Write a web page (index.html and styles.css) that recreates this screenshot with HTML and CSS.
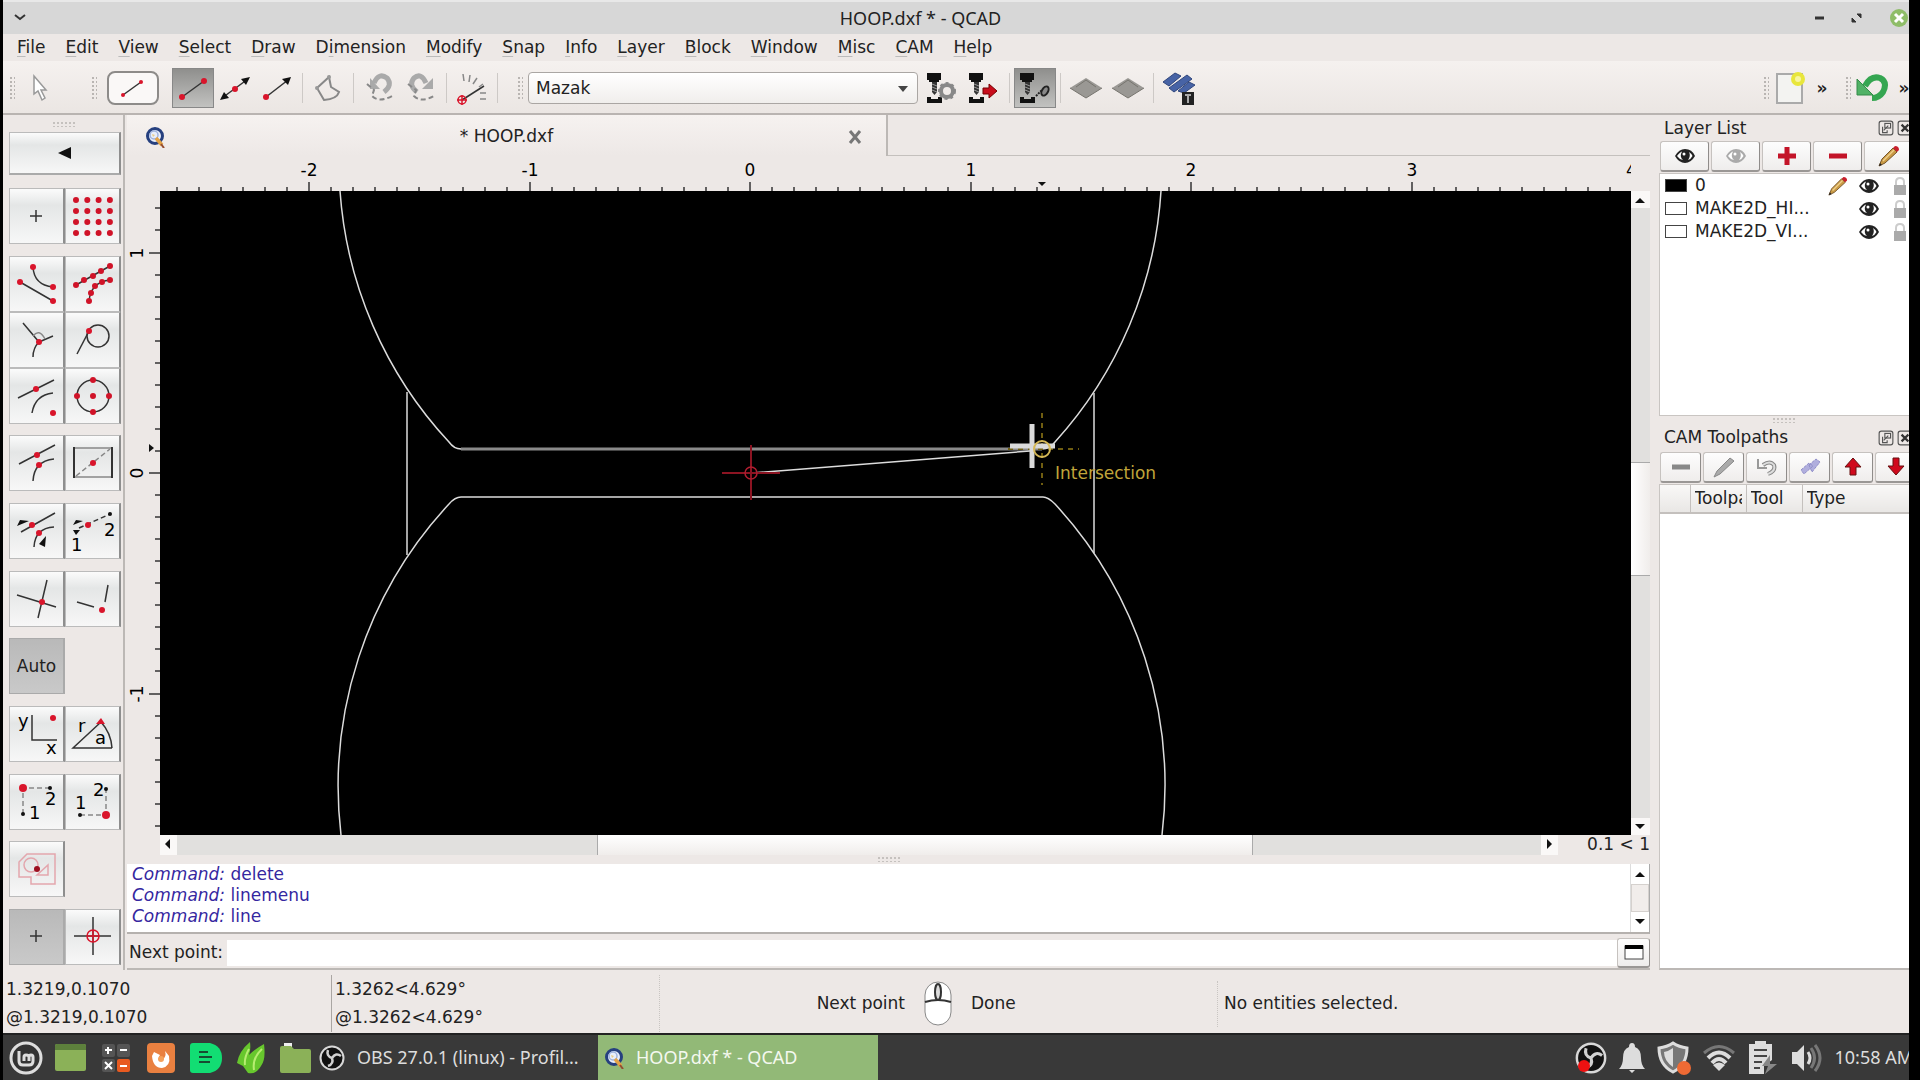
FILE: index.html
```html
<!DOCTYPE html>
<html lang="en">

<head>
    <meta charset="UTF-8">
    <meta name="viewport" content="width=device-width, initial-scale=1.0">
    <title>HOOP.dxf * - QCAD</title>
    <link rel="stylesheet" href="styles.css">
</head>

<body>
    <!-- Shared icons -->
    <svg class="defs" width="0" height="0">
        <symbol id="eye" viewBox="0 0 22 18">
            <path d="M1 9Q5 2 11 2Q18 2 21 9Q17 16 11 16Q5 16 1 9Z" fill="currentColor" />
            <path d="M3 9Q6 5 8 4.500Q5 10 9 13Q5 12 3 9ZM15 5Q18 7 18.500 9Q17 12 14 13Q17 9 15 5Z" fill="#fff" />
            <circle cx="10" cy="7" r="1.500" fill="#fff" />
        </symbol>
        <symbol id="pencil" viewBox="0 0 22 22">
            <path d="M1 21L4 14L15 3L19 7L7 18Z" fill="#c99a45" stroke="#75552a" />
            <path d="M5 16L16 5" stroke="#efd08b" stroke-width="1.500" />
            <path d="M15 3L17 1Q21 1 21 5L19 7Z" fill="#c8202c" />
            <path d="M1 21L2 18L4 20Z" fill="#222" />
        </symbol>
        <symbol id="lock" viewBox="0 0 14 20">
            <path d="M3 10V6Q3 2 7 2Q11 2 11 6V10" fill="none" stroke="#ccc" stroke-width="2" />
            <rect x="1" y="9" width="12" height="10" fill="#aaa" />
        </symbol>
        <symbol id="qcad" viewBox="0 0 20 22">
            <circle cx="10" cy="10" r="7.500" fill="#e8eefb" stroke="#26407f" stroke-width="3" />
            <circle cx="9" cy="9" r="4" fill="none" stroke="#9fb2dd" stroke-width="1.500" />
            <path d="M11 12L17 19" stroke="#e3a347" stroke-width="3.500" />
            <path d="M7 8L10 9L8 11Z" fill="#e9cc86" />
            <path d="M16 18L19 22" stroke="#944d30" stroke-width="2" />
        </symbol>
        <symbol id="mill" viewBox="0 0 28 32">
            <path d="M1 1H15V8H13V10H3V8H1Z" fill="#111" />
            <path d="M6 10H11V20L8.500 23L6 20Z" fill="#333" />
            <path d="M6 12L11 14M6 15L11 17M6 18L11 20" stroke="#999" />
            <path d="M1 25H5V27H12V25H16V31H1Z" fill="#111" />
        </symbol>
        <symbol id="float" viewBox="0 0 14 14">
            <rect x="1" y="1" width="12" height="12" rx="2" fill="none" stroke="#555" />
            <rect x="6" y="3" width="5" height="4" fill="none" stroke="#555" />
            <path d="M4 6V11H8V9M5 9L9 5" fill="none" stroke="#555" />
        </symbol>
        <symbol id="shut" viewBox="0 0 14 14">
            <rect x="1" y="1" width="12" height="12" rx="2" fill="none" stroke="#555" />
            <path d="M4 4L10 10M10 4L4 10" stroke="#333" stroke-width="2" />
        </symbol>
        <symbol id="obs" viewBox="0 0 26 26">
            <circle cx="13" cy="13" r="11.500" fill="#111" stroke="#d8d8d8" stroke-width="2" />
            <path d="M13 13Q7 11 9 5M13 13Q17 7 22 11M13 13Q15 19 9 21" fill="none" stroke="#d0d0d0" stroke-width="2.500" />
        </symbol>
    </svg>

    <div class="window">
        <header class="titlebar">
            <button class="plain" aria-label="Window menu"><svg width="12" height="8"><path d="M1 1L6 5L11 1" class="k2" /></svg></button>
            <h1>HOOP.dxf * - QCAD</h1>
            <div class="window-buttons">
                <button class="plain" aria-label="Minimize"><svg width="10" height="10"><path d="M0 5H9" class="k3" /></svg></button>
                <button class="plain" aria-label="Maximize"><svg width="12" height="12"><path d="M6 2H10V6ZM1 6V10H5Z" fill="#333" stroke="#333" /></svg></button>
                <button class="plain" aria-label="Close"><svg width="20" height="20"><circle cx="10" cy="10" r="9" fill="#8fbd68" /><path d="M6 6L14 14M14 6L6 14" stroke="#fff" stroke-width="3" /></svg></button>
            </div>
        </header>

        <nav class="menubar">
            <a href="#"><u>F</u>ile</a>
            <a href="#"><u>E</u>dit</a>
            <a href="#"><u>V</u>iew</a>
            <a href="#"><u>S</u>elect</a>
            <a href="#"><u>D</u>raw</a>
            <a href="#">D<u>i</u>mension</a>
            <a href="#"><u>M</u>odify</a>
            <a href="#"><u>S</u>nap</a>
            <a href="#"><u>I</u>nfo</a>
            <a href="#"><u>L</u>ayer</a>
            <a href="#"><u>B</u>lock</a>
            <a href="#"><u>W</u>indow</a>
            <a href="#"><u>M</u>isc</a>
            <a href="#"><u>C</u>AM</a>
            <a href="#"><u>H</u>elp</a>
        </nav>

        <div class="toolbar">
            <span class="grip"></span>
            <button class="tool wide" aria-label="Reset"><svg width="22" height="30"><path d="M5 3L17 17L12 17L16 25L13 27L9 18L5 21Z" fill="#fff" stroke="#999" stroke-width="1.500" /></svg></button>
            <span class="grip grip-far"></span>
            <button class="tool framed" aria-label="Line tools"><svg width="32" height="24"><path d="M6 19L24 6" class="k1" /><circle cx="6" cy="19" r="2" class="r" /><circle cx="24" cy="6" r="2" class="r" /></svg></button>
            <button class="tool pressed" aria-label="Line from two points"><svg width="34" height="34"><path d="M6 26L28 10" class="k1" /><circle cx="6" cy="26" r="3" class="r" /><circle cx="28" cy="10" r="3" class="r" /></svg></button>
            <button class="tool" aria-label="Infinite line"><svg width="34" height="34"><path d="M4 27L30 8" class="k1" /><path d="M2 29L6 21L11 27ZM32 6L28 14L23 8Z" class="k" /><circle cx="17" cy="18" r="3" class="r" /></svg></button>
            <button class="tool" aria-label="Ray"><svg width="34" height="34"><path d="M6 26L28 9" class="k1" /><path d="M31 6L28 14L22 8Z" class="k" /><circle cx="6" cy="26" r="3" class="r" /></svg></button>
            <span class="sep"></span>
            <button class="tool" aria-label="Polyline"><svg width="34" height="34"><path d="M6 17L18 6L20 16L28 21Q26 28 13 29Z" class="g2" /><circle cx="6" cy="17" r="2" fill="#999" /><circle cx="18" cy="6" r="2" fill="#999" /></svg></button>
            <span class="sep"></span>
            <button class="tool" aria-label="Undo segment"><svg width="34" height="34"><path d="M12 12Q17 1 25 7Q31 14 22 21" fill="none" stroke="#aaa" stroke-width="5" /><path d="M8 7V18H18Z" fill="#aaa" /><path d="M5 13L12 19L10 25Q17 32 30 25" class="g2 dash" /></svg></button>
            <button class="tool" aria-label="Redo segment"><svg width="34" height="34"><path d="M22 12Q17 1 10 7Q4 14 13 21" fill="none" stroke="#aaa" stroke-width="5" /><path d="M29 7V18H18Z" fill="#aaa" /><path d="M4 13L12 19L10 25Q17 32 30 25" class="g2 dash" /></svg></button>
            <span class="sep"></span>
            <button class="tool" aria-label="Angle"><svg width="34" height="34"><path d="M7 29L29 15" class="k1" /><path d="M8 3L9 10M15 4L14 11M22 7L18 13M28 13L24 16M31 22H25M31 28H25" class="g1" /><circle cx="7" cy="29" r="4" class="ro" /><path d="M2 29H12M7 24V34" class="rl" /></svg></button>
            <span class="sep"></span>
            <span class="grip"></span>
            <div class="combo">
                <select aria-label="CAM configuration">
                    <option>Mazak</option>
                </select>
                <svg width="10" height="6"><path d="M0 0H10L5 6Z" fill="#444" /></svg>
            </div>
            <button class="tool" aria-label="CAM setup"><svg width="32" height="32"><use href="#mill" width="28" height="32" /><circle cx="21" cy="19" r="6" fill="none" stroke="#888" stroke-width="4" /><circle cx="21" cy="19" r="8" fill="none" stroke="#888" stroke-width="2" stroke-dasharray="3 3" /></svg></button>
            <button class="tool" aria-label="CAM export"><svg width="32" height="32"><use href="#mill" width="28" height="32" /><path d="M15 16H21V12L29 19L21 26V22H15Z" fill="#c80d1c" stroke="#700" /></svg></button>
            <span class="sep"></span>
            <button class="tool pressed" aria-label="CAM toolpaths"><svg width="32" height="32"><use href="#mill" width="28" height="32" /><path d="M17 24L23 18" stroke="#222" stroke-width="2" stroke-dasharray="2 1" /><ellipse cx="26" cy="19" rx="3" ry="5" transform="rotate(30 26 19)" fill="#888" stroke="#222" stroke-width="2" /></svg></button>
            <span class="sep"></span>
            <button class="tool" aria-label="Simulate"><svg width="34" height="26"><path d="M1 13L17 3L33 13L17 23Z" fill="#9a9894" /><path d="M7 12L17 5L27 12M1 13L17 23L33 13" fill="none" stroke="#77756f" /></svg></button>
            <button class="tool" aria-label="Simulate all"><svg width="34" height="26"><path d="M1 13L17 3L33 13L17 23Z" fill="#9a9894" /><path d="M7 12L17 5L27 12M1 13L17 23L33 13" fill="none" stroke="#77756f" /></svg></button>
            <span class="sep"></span>
            <button class="tool" aria-label="Tool database"><svg width="36" height="36"><path d="M2 12L14 3L20 6L8 16ZM8 18L26 5L31 9L13 22ZM17 21L28 12L34 15L23 23Z" fill="#4763a5" stroke="#30467c" /><rect x="21" y="22" width="12" height="13" fill="#222" /><path d="M24 25H30M27 25V33" stroke="#aaa" stroke-width="2" /></svg></button>
            <span class="spring"></span>
            <span class="grip"></span>
            <button class="tool" aria-label="New"><svg width="32" height="34"><rect x="3" y="3" width="25" height="29" fill="#f3f3f1" stroke="#aaa" stroke-width="2" /><circle cx="24" cy="8" r="7" fill="#e8e63c" /><circle cx="24" cy="8" r="3" fill="#f8f6a0" /></svg></button>
            <button class="plain more" aria-label="More file tools">»</button>
            <span class="grip"></span>
            <button class="tool" aria-label="Undo"><svg width="34" height="30"><path d="M10 13Q16 2 25 5Q33 9 28 19Q24 25 17 25" fill="none" stroke="#35a651" stroke-width="6" /><path d="M2 6V22H18Z" fill="#51b266" stroke="#358b48" /></svg></button>
            <button class="plain more" aria-label="More edit tools">»</button>
        </div>

        <main class="workspace">
            <aside class="tools">
                <span class="grip-h"></span>
                <button class="cell back" aria-label="Back"><svg width="14" height="14"><path d="M13 1V13L0 7Z" class="k" /></svg></button>
                <div class="tool-groups">
                    <div class="group">
                        <button class="cell" aria-label="Free"><svg class="ic"><path d="M21 28H33M27 22V34" class="k1" /></svg></button>
                        <button class="cell" aria-label="Grid"><svg class="ic"><path d="M11 12H46M11 23H46M11 34H46M11 45H46" class="dots" /></svg></button>
                    </div>
                    <div class="group">
                        <button class="cell" aria-label="End points"><svg class="ic"><path d="M24 11Q25 29 44 31M11 26L44 45" class="k1" /><circle cx="24" cy="11" r="3" class="r" /><circle cx="44" cy="31" r="3" class="r" /><circle cx="11" cy="26" r="3" class="r" /><circle cx="44" cy="45" r="3" class="r" /></svg></button>
                        <button class="cell" aria-label="On entity"><svg class="ic"><path d="M11 29L45 10M24 45Q26 26 45 24" class="k1" /><path d="M11 29h0M19 24h0M28 20h0M36 15h0M45 10h0M24 45h0M26 37h0M30 30h0M37 26h0M45 24h0" class="spots" /></svg></button>
                        <button class="cell" aria-label="Perpendicular"><svg class="ic"><path d="M14 11L30 30L44 24M30 30Q24 36 24 45" class="k1" /><path d="M24 24Q30 16 36 27" class="g1" /><circle cx="30" cy="30" r="3" class="r" /></svg></button>
                        <button class="cell" aria-label="Tangential"><svg class="ic"><path d="M12 42L24 19" class="k1" /><circle cx="33" cy="24" r="11" class="k1" /><circle cx="24" cy="19" r="3" class="r" /></svg></button>
                        <button class="cell" aria-label="Reference"><svg class="ic"><path d="M9 30L45 12M23 45Q26 27 44 25" class="k1" /><circle cx="27" cy="21" r="3" class="r" /><circle cx="44" cy="45" r="3" class="r" /></svg></button>
                        <button class="cell" aria-label="Center"><svg class="ic"><circle cx="28" cy="28" r="16" class="k1" /><path d="M28 12h0M44 28h0M28 44h0M12 28h0M28 28h0" class="spots" /></svg></button>
                    </div>
                    <div class="group">
                        <button class="cell" aria-label="Middle"><svg class="ic"><path d="M10 29L46 10M24 46Q25 26 45 24" class="k1" /><circle cx="28" cy="20" r="3" class="r" /><circle cx="30" cy="30" r="3" class="r" /></svg></button>
                        <button class="cell" aria-label="Middle of rectangle"><svg class="ic"><path d="M9 13H47M9 42H47" class="g1" /><path d="M9 12V43M47 12V43" class="k2" /><path d="M11 41L45 14" class="g1 dash" /><circle cx="28" cy="28" r="3" class="r" /></svg></button>
                    </div>
                    <div class="group">
                        <button class="cell" aria-label="Distance"><svg class="ic"><path d="M12 29L46 10M25 44Q26 25 45 24" class="k1" /><path d="M8 23L11 17L20 18ZM30 41L37 33L36 44Z" class="k" /><circle cx="23" cy="22" r="3" class="r" /><circle cx="30" cy="30" r="3" class="r" /></svg></button>
                        <button class="cell" aria-label="Distance between points"><svg class="ic"><path d="M14 25L45 11" class="k1 dash" /><path d="M8 22L11 17L18 18ZM8 27H15L11 32Z" class="k" /><circle cx="23" cy="22" r="3" class="r" /><circle cx="45" cy="11" r="2" class="k" /><text x="39" y="33">2</text><text x="6" y="48">1</text></svg></button>
                    </div>
                    <div class="group">
                        <button class="cell" aria-label="Intersection"><svg class="ic"><path d="M8 24L47 36M38 9L29 47" class="k1" /><circle cx="33" cy="31" r="3" class="r" /></svg></button>
                        <button class="cell" aria-label="Manual intersection"><svg class="ic"><path d="M12 31L29 36M43 14L40 31" class="k1" /><circle cx="37" cy="39" r="3" class="r" /></svg></button>
                    </div>
                    <div class="group">
                        <button class="cell pressed">Auto</button>
                    </div>
                    <div class="group">
                        <button class="cell" aria-label="Coordinate"><svg class="ic"><path d="M23 9V34H48" class="k1" /><circle cx="44" cy="12" r="3" class="r" /><text x="9" y="21">y</text><text x="37" y="48">x</text></svg></button>
                        <button class="cell" aria-label="Polar coordinate"><svg class="ic"><path d="M47 42H8L36 16Q46 27 47 42" class="k1" /><path d="M31 18L36 12L40 18Z" class="r" /><text x="13" y="26">r</text><text x="30" y="38">a</text></svg></button>
                    </div>
                    <div class="group">
                        <button class="cell" aria-label="Restrict vertically"><svg class="ic"><path d="M41 14H14V40" class="g1 dash" /><circle cx="14" cy="14" r="4" class="r" /><circle cx="41" cy="14" r="2" class="k" /><circle cx="14" cy="40" r="2" class="k" /><text x="36" y="31">2</text><text x="20" y="45">1</text></svg></button>
                        <button class="cell" aria-label="Restrict horizontally"><svg class="ic"><path d="M15 41H41V15" class="g1 dash" /><circle cx="41" cy="41" r="4" class="r" /><circle cx="41" cy="15" r="2" class="k" /><circle cx="15" cy="41" r="2" class="k" /><text x="28" y="22">2</text><text x="10" y="35">1</text></svg></button>
                    </div>
                    <div class="group">
                        <button class="cell" aria-label="Lock relative zero"><svg class="ic"><path d="M46 13H18L10 21V36H22V43H46Z" class="pink" /><circle cx="22" cy="24" r="7" class="pink" /><path d="M28 34H39V24Z" class="pink" /><circle cx="28" cy="28" r="3" fill="#9c1020" /></svg></button>
                    </div>
                    <div class="group">
                        <button class="cell pressed" aria-label="No restriction"><svg class="ic"><path d="M21 27H33M27 21V33" class="k1" /></svg></button>
                        <button class="cell" aria-label="Set relative zero"><svg class="ic"><path d="M9 27H46M28 8V46" class="k1" /><circle cx="28" cy="27" r="6" class="ro" /><path d="M22 27H34M28 21V33" class="rl" /></svg></button>
                    </div>
                </div>
            </aside>

            <section class="document">
                <div class="tabs">
                    <div class="tab">
                        <svg width="20" height="22"><use href="#qcad" /></svg>
                        <span class="tab-name">* HOOP.dxf</span>
                        <button class="plain" aria-label="Close tab"><svg width="14" height="14"><path d="M2 1L12 13M12 1L2 13" stroke="#777" stroke-width="3" /></svg></button>
                    </div>
                </div>

                <div class="drawing">
                    <svg class="ruler-top" id="rulerTop"><path d="M911 26H919L915 30Z" class="k" /></svg>
                    <svg class="ruler-left" id="rulerLeft"><path d="M22 253L27 257L22 261Z" class="k" /></svg>
                    <svg class="canvas">
                        <g transform="translate(-160 -191)" fill="none" stroke="#dcdcdc" stroke-width="1.500">
                            <path d="M340 191A411 411 0 0 0 449 442Q454 449 461 449" />
                            <path d="M1161 191A411 411 0 0 1 1055 442Q1050 449 1042 449" />
                            <path d="M461 449H1042" stroke="#8a8a8a" stroke-width="3" />
                            <path d="M341 835A415 415 0 0 1 449 504Q455 497 461 497H1043Q1048 497 1055 504A415 415 0 0 1 1162 835" />
                            <path d="M407 392V555M1094 393V553" />
                            <path d="M751 473L1030 451" />
                            <path d="M722 473H780M751 445V500" stroke="#8c1422" stroke-width="2" />
                            <circle cx="751" cy="473" r="6" stroke="#b01e30" />
                            <path d="M1042 413V485M1008 449H1079" stroke="#6f5d10" stroke-width="2" stroke-dasharray="5 5" />
                            <path d="M1010 446H1055M1032 424V468" stroke="#dadada" stroke-width="5" />
                            <circle cx="1042" cy="449" r="8" stroke="#d6b957" stroke-width="2" />
                            <text x="1055" y="479">Intersection</text>
                        </g>
                    </svg>
                    <div class="scroll-v">
                        <svg width="18" height="17"><path d="M4 12L9 7L14 12Z" class="k" /></svg>
                        <span class="groove g-v1"></span><span class="thumb"></span><span class="groove g-v2"></span>
                        <svg width="18" height="17"><path d="M4 6L9 11L14 6Z" class="k" /></svg>
                    </div>
                    <div class="scroll-h">
                        <svg width="17" height="18"><path d="M10 4L5 9L10 14Z" class="k" /></svg>
                        <span class="groove g-h1"></span><span class="thumb"></span><span class="groove g-h2"></span>
                        <svg width="17" height="18"><path d="M6 4L11 9L6 14Z" class="k" /></svg>
                    </div>
                    <span class="grid-info">0.1 &lt; 1</span>
                </div>

                <span class="grip-h split"></span>

                <div class="history">
                    <div class="log">
                        <p><i>Command:</i> delete</p>
                        <p><i>Command:</i> linemenu</p>
                        <p><i>Command:</i> line</p>
                    </div>
                    <div class="log-scroll">
                        <svg width="18" height="20"><path d="M4 13L9 8L14 13Z" class="k" /></svg>
                        <span class="log-groove"></span>
                        <svg width="18" height="20"><path d="M4 7L9 12L14 7Z" class="k" /></svg>
                    </div>
                </div>

                <div class="command">
                    <label for="commandInput">Next point:</label>
                    <input type="text" id="commandInput">
                    <button class="panel-btn" aria-label="Toggle history"><svg width="20" height="15"><rect x="1" y="1" width="18" height="13" fill="#fff" stroke="#444" /><path d="M1 2H19" stroke="#000" stroke-width="4" /></svg></button>
                </div>
            </section>

            <aside class="docks">
                <section class="dock layers">
                    <div class="dock-title">
                        <h2>Layer List</h2>
                        <button class="plain" aria-label="Float layer list"><svg width="16" height="16"><use href="#float" /></svg></button>
                        <button class="plain" aria-label="Close layer list"><svg width="16" height="16"><use href="#shut" /></svg></button>
                    </div>
                    <div class="dock-buttons">
                        <button class="panel-btn" aria-label="Show all"><svg width="22" height="18"><use href="#eye" /></svg></button>
                        <button class="panel-btn dim" aria-label="Hide all"><svg width="22" height="18"><use href="#eye" /></svg></button>
                        <button class="panel-btn" aria-label="Add layer"><svg width="18" height="18"><path d="M0 9H18M9 0V18" stroke="#c31428" stroke-width="5" /></svg></button>
                        <button class="panel-btn" aria-label="Remove layer"><svg width="18" height="18"><path d="M0 9H18" stroke="#c31428" stroke-width="5" /></svg></button>
                        <button class="panel-btn" aria-label="Edit layer"><svg width="22" height="22"><use href="#pencil" /></svg></button>
                    </div>
                    <ul class="layer-list">
                        <li><span class="swatch black"></span><span class="layer-name">0</span><svg width="20" height="20"><use href="#pencil" /></svg><svg class="vis" width="22" height="18"><use href="#eye" /></svg><svg width="14" height="20"><use href="#lock" /></svg></li>
                        <li><span class="swatch"></span><span class="layer-name">MAKE2D_HI...</span><svg class="vis" width="22" height="18"><use href="#eye" /></svg><svg width="14" height="20"><use href="#lock" /></svg></li>
                        <li><span class="swatch"></span><span class="layer-name">MAKE2D_VI...</span><svg class="vis" width="22" height="18"><use href="#eye" /></svg><svg width="14" height="20"><use href="#lock" /></svg></li>
                    </ul>
                </section>

                <span class="grip-h"></span>

                <section class="dock cam">
                    <div class="dock-title">
                        <h2>CAM Toolpaths</h2>
                        <button class="plain" aria-label="Float toolpaths"><svg width="16" height="16"><use href="#float" /></svg></button>
                        <button class="plain" aria-label="Close toolpaths"><svg width="16" height="16"><use href="#shut" /></svg></button>
                    </div>
                    <div class="dock-buttons">
                        <button class="panel-btn" aria-label="Remove toolpath"><svg width="18" height="18"><path d="M0 9H18" stroke="#888" stroke-width="5" /></svg></button>
                        <button class="panel-btn" aria-label="Edit toolpath"><svg width="22" height="22"><path d="M1 21L4 15L17 2L21 5L7 18Z" fill="#aaa" stroke="#888" /></svg></button>
                        <button class="panel-btn" aria-label="Regenerate"><svg width="22" height="20"><path d="M7 8Q14 3 18 8Q20 14 12 17" fill="none" stroke="#888" stroke-width="4" /><path d="M7 8Q14 3 18 8Q20 14 12 17" fill="none" stroke="#ddd" stroke-width="2" /><path d="M2 2V11H11" fill="none" stroke="#999" stroke-width="2" /></svg></button>
                        <button class="panel-btn" aria-label="Show toolpaths"><svg width="22" height="20"><path d="M2 13L10 6L14 9L5 17ZM10 8L17 2L21 5L13 15Z" fill="#b0aedd" stroke="#8e8cc8" stroke-dasharray="3 1" /></svg></button>
                        <button class="panel-btn" aria-label="Move up"><svg width="18" height="20"><path d="M9 1L17 10H12V18H6V10H1Z" fill="#d0091c" stroke="#611" /></svg></button>
                        <button class="panel-btn" aria-label="Move down"><svg width="18" height="20"><path d="M9 18L17 9H12V1H6V9H1Z" fill="#d0091c" stroke="#611" /></svg></button>
                    </div>
                    <div class="toolpaths">
                        <table>
                            <thead>
                                <tr>
                                    <th class="c-check"></th>
                                    <th class="c-tool"><span>Toolpath</span></th>
                                    <th class="c-tool"><span>Tool</span></th>
                                    <th><span>Type</span></th>
                                </tr>
                            </thead>
                        </table>
                    </div>
                </section>
            </aside>
        </main>

        <footer class="statusbar">
            <div class="coords absolute"><span>1.3219,0.1070</span><span>@1.3219,0.1070</span></div>
            <div class="coords polar"><span>1.3262&lt;4.629°</span><span>@1.3262&lt;4.629°</span></div>
            <div class="hint">
                <span class="hint-left">Next point</span>
                <svg width="28" height="46"><rect x="1" y="1" width="26" height="43" rx="13" fill="#fff" stroke="#888" /><path d="M1 21Q14 17 27 21" class="k2" /><ellipse cx="14" cy="11" rx="3" ry="8" fill="#ddd" stroke="#333" stroke-width="2" /></svg>
                <span class="hint-right">Done</span>
            </div>
            <div class="selection">No entities selected.</div>
        </footer>

        <div class="taskbar">
            <div class="launchers">
                <button class="plain" aria-label="Menu"><svg width="34" height="34"><circle cx="17" cy="17" r="15" fill="#333" stroke="#ddd" stroke-width="3" /><path d="M10 10V20Q10 24 14 24H20Q24 24 24 20V16Q24 14 22 14Q20 14 20 16V20M20 16Q20 14 17 14Q15 14 15 16V20" fill="none" stroke="#ddd" stroke-width="3" /></svg></button>
                <button class="plain" aria-label="Show desktop"><svg width="32" height="28"><rect width="31" height="27" rx="2" fill="#8bb158" /><path d="M0 2Q0 0 2 0H29Q31 0 31 2V6H0Z" fill="#5d803c" /></svg></button>
                <button class="plain" aria-label="Calculator"><svg width="30" height="30"><rect x="1" y="1" width="13" height="13" rx="2" fill="#555" /><rect x="16" y="1" width="13" height="13" rx="2" fill="#555" /><rect x="1" y="16" width="13" height="13" rx="2" fill="#555" /><rect x="16" y="16" width="13" height="13" rx="2" fill="#e85a20" /><path d="M4 7H11M7 4V11M19 7H26M4 19L11 26M11 19L4 26M19 23H26" stroke="#fff" stroke-width="2" /></svg></button>
                <button class="plain" aria-label="Firefox"><svg width="28" height="30"><rect width="28" height="30" rx="4" fill="#e98040" /><path d="M5 13Q6 25 15 25Q24 23 22 13L18 8Q20 14 15 17Q10 16 13 12L7 9Z" fill="#fff" /><circle cx="14" cy="16" r="3" fill="#f5a05a" /></svg></button>
                <button class="plain" aria-label="Notes"><svg width="32" height="30"><path d="M3 0H20Q32 3 32 15Q32 27 20 30H3Q0 30 0 27V3Q0 0 3 0Z" fill="#12dd73" /><path d="M9 9H18M9 14H22M9 19H20" stroke="#174c31" stroke-width="2" /></svg></button>
                <button class="plain" aria-label="Leaf"><svg width="30" height="34"><path d="M1 22Q3 10 14 1Q15 9 13 14Q19 8 28 3Q30 19 25 25Q20 34 12 32L7 25Z" fill="#67c72d" /><path d="M9 24Q8 17 13 8M18 29Q16 17 26 8" fill="none" stroke="#b7ed71" stroke-width="2" /></svg></button>
                <button class="plain" aria-label="Files"><svg width="32" height="32"><path d="M4 1H12V6H4Z" fill="#eee" /><path d="M0 6Q0 4 2 4H11L14 7H29Q31 7 31 9V29Q31 31 29 31H2Q0 31 0 29Z" fill="#8bb158" /></svg></button>
            </div>
            <button class="task"><svg width="26" height="26"><use href="#obs" /></svg>OBS 27.0.1 (linux) - Profil...</button>
            <button class="task active"><svg width="20" height="22"><use href="#qcad" /></svg>HOOP.dxf * - QCAD</button>
            <div class="tray">
                <svg width="34" height="34"><use href="#obs" width="32" height="32" x="1" y="1" /><circle cx="10" cy="25" r="6" fill="#ee1111" /></svg>
                <svg width="28" height="32"><path d="M14 1Q17 1 17 5Q23 7 23 16Q23 23 27 27H1Q5 23 5 16Q5 7 11 5Q11 1 14 1ZM11 28H17L14 31Z" fill="#ddd" /></svg>
                <svg width="36" height="34"><path d="M17 2Q23 6 31 7Q31 24 17 31Q3 24 3 7Q11 6 17 2Z" fill="#777" stroke="#ddd" stroke-width="3" /><path d="M17 7V26Q8 20 8 11Q13 10 17 7Z" fill="#ddd" /><circle cx="28" cy="27" r="7" fill="#ee6a34" /></svg>
                <svg width="34" height="30"><path d="M2 10Q17 -3 32 10" fill="none" stroke="#777" stroke-width="3" /><path d="M6 15Q17 4 28 15M10 20Q17 12 24 20" fill="none" stroke="#ddd" stroke-width="4" /><path d="M11 22Q17 17 23 22L17 28Z" fill="#ddd" /></svg>
                <svg width="34" height="36"><path d="M9 4V1H20V4H26V20L18 26V34H3V4Z" fill="#ddd" /><path d="M8 10H21M8 16H21M8 22H16M8 28H14" stroke="#444" stroke-width="2" /><path d="M24 15L16 26H22L19 34L31 24H24Z" fill="#888" /></svg>
                <svg width="34" height="30"><path d="M2 9H7L14 2V28L7 21H2Z" fill="#ddd" /><path d="M18 9Q22 15 18 21" fill="none" stroke="#ddd" stroke-width="3" /><path d="M21 5Q28 15 21 25M25 2Q35 15 25 28" fill="none" stroke="#777" stroke-width="3" /></svg>
                <time>10:58 AM</time>
            </div>
        </div>
    </div>

    <script>
        // Rulers: one unit is 220.5 px, with ten ticks to each unit
        const UNIT = 220.5;
        const ORIGIN_X = 750 - 127;
        const ORIGIN_Y = 473 - 191;

        function drawTopRuler() {
            let out = '';
            for (let i = -26; i <= 39; i++) {
                const x = Math.round(ORIGIN_X + i * UNIT / 10);
                const major = i % 10 === 0;
                out += `<path d="M${x} ${major ? 26 : 31}V35" class="k1"/>`;
                if (major) {
                    out += `<text x="${x}" y="20" text-anchor="middle">${i / 10}</text>`;
                }
            }
            out += '<text x="1499" y="20">4</text>';
            document.getElementById('rulerTop').innerHTML += out;
        }

        function drawLeftRuler() {
            let out = '';
            for (let i = -16; i <= 12; i++) {
                const y = Math.round(ORIGIN_Y - i * UNIT / 10);
                const major = i % 10 === 0;
                out += `<path d="M${major ? 22 : 28} ${y}H33" class="k1"/>`;
                if (major) {
                    out += `<text transform="translate(16 ${y}) rotate(-90)" text-anchor="middle">${i / 10}</text>`;
                }
            }
            document.getElementById('rulerLeft').innerHTML += out;
        }

        drawTopRuler();
        drawLeftRuler();
    </script>
</body>

</html>
```
FILE: styles.css
```css
* {
    box-sizing: border-box;
}

body {
    margin: 0;
    background: #000;
    color: #222;
    font-family: "DejaVu Sans", sans-serif;
    font-size: 17px;
    line-height: 21px;
}

h1,
h2,
p,
ul {
    margin: 0;
    padding: 0;
    font-size: inherit;
    font-weight: normal;
}

button,
input,
select {
    font: inherit;
    color: inherit;
    padding: 0;
    margin: 0;
}

svg {
    display: block;
    flex: none;
}

.defs {
    position: absolute;
}

.window {
    height: 100vh;
    margin: 0 11px 0 3px;
    display: flex;
    flex-direction: column;
    overflow: hidden;
    background: #ede8e6;
}

/* Stroke and fill helpers for the icons */
.k {
    fill: #111;
}

.k1,
.k2,
.k3,
.g1,
.g2,
.ro,
.rl,
.pink,
.dots,
.spots {
    fill: none;
    stroke: #333;
    stroke-width: 1.5;
}

.k2 {
    stroke-width: 2;
}

.k3 {
    stroke-width: 3;
}

.g1,
.g2 {
    stroke: #888;
}

.g2 {
    stroke-width: 2;
}

.r {
    fill: #d9152b;
}

.ro,
.rl {
    stroke: #d9152b;
}

.pink {
    stroke: #e3a6ad;
}

.dots,
.spots {
    stroke: #d01328;
    stroke-width: 6;
    stroke-linecap: round;
}

.dots {
    stroke-dasharray: 0 11.3;
}

.dash {
    stroke-dasharray: 5 3;
}

.plain {
    display: flex;
    align-items: center;
    justify-content: center;
    border: 0;
    background: none;
}

/* Title and menu */
.titlebar {
    height: 34px;
    flex: none;
    display: flex;
    align-items: center;
    padding: 0 0 0 11px;
    border-top: 2px solid #e8e8e8;
    background: #d7d7d7;
    font-family: "Noto Sans", sans-serif;
    font-size: 18px;
}

.titlebar h1 {
    flex: 1;
    text-align: center;
}

.window-buttons {
    display: flex;
    align-items: center;
    gap: 26px;
}

.menubar {
    height: 27px;
    flex: none;
    display: flex;
    align-items: center;
    gap: 20px;
    padding: 0 14px;
}

.menubar a {
    color: inherit;
    text-decoration: none;
}

.menubar u {
    text-decoration-color: #bbb;
    text-underline-offset: 3px;
}

/* Toolbar */
.toolbar {
    height: 54px;
    flex: none;
    display: flex;
    align-items: center;
    padding: 2px 0 0 6px;
    border-bottom: 2px solid #b9b4b1;
    background: linear-gradient(#f5f1ef, #ebe6e3);
}

.grip {
    width: 6px;
    height: 24px;
    flex: none;
    background: radial-gradient(circle, #b9b5b2 1px, transparent 1px) 0 0 / 4px 4px;
}

.grip-far {
    margin: 0 10px 0 30px;
}

.sep {
    width: 1px;
    height: 30px;
    flex: none;
    margin: 0 4px;
    background: #cdc9c6;
}

.sep + .grip {
    margin-left: 15px;
}

.tool {
    min-width: 42px;
    height: 40px;
    flex: none;
    display: flex;
    align-items: center;
    justify-content: center;
    border: 1px solid transparent;
    background: none;
}

.tool.wide {
    margin-left: 4px;
}

.tool.framed {
    width: 52px;
    height: 34px;
    margin-right: 13px;
    border: 2px solid #8d8b89;
    border-radius: 8px;
    background: #faf8f7;
}

.tool.pressed {
    border-color: #888;
    background: linear-gradient(#8f8f8d, #c2c2c0);
}

.combo {
    position: relative;
    width: 390px;
    height: 32px;
    margin: 0 3px 0 5px;
}

.combo select {
    width: 100%;
    height: 100%;
    padding: 0 7px;
    appearance: none;
    border: 1px solid #aaa6a3;
    border-radius: 4px;
    background: linear-gradient(#fff, #f0eeec);
}

.combo svg {
    position: absolute;
    right: 10px;
    top: 14px;
}

.spring {
    flex: 1;
}

.more {
    width: 22px;
    height: 30px;
    font-weight: bold;
}

.more + .grip {
    margin-left: 12px;
}

.more:last-child {
    margin-right: -6px;
}

/* Workspace */
.workspace {
    flex: 1;
    min-height: 0;
    display: flex;
}

.tools {
    width: 122px;
    flex: none;
    display: flex;
    flex-direction: column;
    padding: 6px 4px 5px 6px;
    border-right: 2px solid #bcb8b5;
}

.grip-h {
    width: 24px;
    height: 6px;
    flex: none;
    align-self: center;
    background: radial-gradient(circle, #c5c1be 1px, transparent 1px) 0 0 / 4px 4px;
}

.cell {
    width: 56px;
    height: 56px;
    display: flex;
    align-items: center;
    justify-content: center;
    border: 1px solid #bbb;
    border-right: 2px solid #8e8e8e;
    background: linear-gradient(#fbfbfb, #e4e6e6 30%, #f7f7f7);
}

.cell.pressed {
    border-color: #aaa;
    background: linear-gradient(#b9b9b9, #c9c9c9);
}

.cell.back {
    width: 112px;
    height: 43px;
    margin: 5px 0 13px;
    border-bottom: 2px solid #aaa;
}

.ic {
    width: 56px;
    height: 56px;
    margin: -1px;
    font-size: 18px;
}

.tool-groups {
    flex: 1;
    display: flex;
    flex-direction: column;
    justify-content: space-between;
}

.group {
    display: grid;
    grid-template-columns: 56px 56px;
}

.document {
    flex: 1;
    min-width: 0;
    display: flex;
    flex-direction: column;
    margin-left: 2px;
    border-bottom: 2px solid #bcb8b5;
}

.tabs {
    height: 41px;
    flex: none;
    display: flex;
    border-bottom: 1px solid #c4c0bd;
}

.tab {
    width: 761px;
    height: 41px;
    display: flex;
    align-items: center;
    padding: 2px 24px 0 18px;
    border-right: 2px solid #bcb8b5;
    background: linear-gradient(#f6f2f0, #ede8e6);
}

.tab-name {
    flex: 1;
    text-align: center;
}

.drawing {
    flex: 1;
    min-height: 0;
    display: grid;
    grid-template-columns: 33px 1fr 73px 19px;
    grid-template-rows: 35px 1fr 20px;
}

.ruler-top {
    grid-area: 1 / 1 / 2 / 4;
    width: 100%;
    height: 35px;
}

.ruler-left {
    grid-area: 2 / 1;
    width: 33px;
    height: 100%;
}

.canvas {
    grid-area: 2 / 2 / 3 / 4;
    width: 100%;
    height: 100%;
    background: #000;
}

.canvas text {
    fill: #c0a53a;
    stroke: none;
}

.scroll-v {
    grid-area: 2 / 4;
    display: flex;
    flex-direction: column;
    background: #faf8f7;
}

.scroll-h {
    grid-area: 3 / 2;
    display: flex;
    background: #faf8f7;
}

.groove {
    background: #e1e0de;
}

.g-v1 {
    flex: 254;
    border-bottom: 1px solid #aaa;
}

.scroll-v .thumb {
    flex: 113;
    background: linear-gradient(90deg, #fff, #f0edeb);
}

.g-v2 {
    flex: 242;
    border-top: 1px solid #aaa;
}

.g-h1 {
    flex: 421;
    border-right: 1px solid #aaa;
}

.scroll-h .thumb {
    flex: 655;
    background: linear-gradient(#fff, #f0edeb);
}

.g-h2 {
    flex: 288;
    border-left: 1px solid #aaa;
}

.grid-info {
    grid-area: 3 / 3 / 4 / 5;
    align-self: end;
    text-align: right;
    white-space: nowrap;
}

.split {
    margin: 1px 0 2px;
}

.history {
    height: 70px;
    flex: none;
    display: flex;
    border-bottom: 2px solid #b5b1ae;
    border-right: 1px solid #aaa;
    background: #fff;
}

.log {
    flex: 1;
    padding-left: 5px;
    color: #3527a0;
}

.log-scroll {
    display: flex;
    flex-direction: column;
    border-left: 1px solid #ddd;
}

.log-groove {
    flex: 1;
    border: 1px solid #d5d1ce;
    background: #f1edeb;
}

.command {
    height: 34px;
    flex: none;
    display: flex;
    align-items: center;
    padding: 3px 0 0 2px;
}

.command label {
    width: 98px;
}

.command input {
    flex: 1;
    height: 26px;
    border: 0;
    padding: 0 4px;
    background: #fff;
}

.command .panel-btn {
    width: 33px;
    height: 30px;
}

/* Docks on the right */
.docks {
    width: 259px;
    flex: none;
    display: flex;
    flex-direction: column;
    padding-left: 9px;
    overflow: hidden;
}

.dock {
    width: 262px;
    display: flex;
    flex-direction: column;
}

.layers {
    height: 301px;
    flex: none;
}

.cam {
    flex: 1;
}

.cam .dock-title {
    height: 29px;
}

.docks > .grip-h {
    margin-top: 1px;
}

.dock-title {
    height: 26px;
    flex: none;
    display: flex;
    align-items: center;
    gap: 3px;
    padding: 0 8px 0 5px;
}

.dock-title h2 {
    flex: 1;
}

.dock-buttons {
    flex: none;
    display: flex;
    gap: 2px;
    padding: 0 1px 1px;
}

.panel-btn {
    height: 31px;
    display: flex;
    align-items: center;
    justify-content: center;
    border: 1px solid #c6c2bf;
    border-right-color: #8f8c8a;
    border-bottom: 2px solid #9a9795;
    border-radius: 3px;
    background: linear-gradient(#fdfdfd, #efedec);
}

.dock-buttons .panel-btn {
    flex: none;
    width: 49px;
}

.dim {
    color: #aaa;
}

.cam .dock-buttons .panel-btn {
    width: 41px;
}

.layer-list {
    flex: 1;
    padding: 0 3px 0 5px;
    list-style: none;
    background: #fff;
    border: 1px solid #c9c5c2;
}

.layer-list li {
    width: 242px;
    height: 23px;
    display: flex;
    align-items: center;
}

.swatch {
    width: 22px;
    height: 13px;
    margin-right: 8px;
    border: 1px solid #444;
}

.swatch.black {
    background: #000;
}

.layer-name {
    flex: 1;
    white-space: nowrap;
}

.vis {
    margin: 0 13px 0 10px;
}

.toolpaths {
    flex: 1;
    background: #fff;
    border: 1px solid #c9c5c2;
    border-bottom: 2px solid #bcb8b5;
}

.toolpaths table {
    width: 100%;
    table-layout: fixed;
    border-collapse: collapse;
}

.toolpaths th {
    height: 28px;
    padding: 0 4px;
    text-align: left;
    font-weight: normal;
    border-right: 1px solid #c4c0bd;
    border-bottom: 2px solid #c4c0bd;
    background: linear-gradient(#f9f8f7, #e9e7e5);
}

.toolpaths th span {
    display: block;
    overflow: hidden;
}

.toolpaths .c-check {
    width: 30px;
}

.toolpaths .c-tool {
    width: 56px;
}

/* Status bar */
.statusbar {
    height: 63px;
    flex: none;
    display: flex;
    align-items: center;
    padding-top: 4px;
}

.coords {
    display: flex;
    flex-direction: column;
    gap: 7px;
    padding: 4px 3px;
}

.coords.absolute {
    width: 329px;
    border-right: 1px solid #aaa6a3;
}

.coords.polar {
    width: 328px;
    border-right: 1px dotted #c9c5c2;
}

.hint {
    width: 558px;
    display: flex;
    align-items: center;
    gap: 19px;
    border-right: 1px dotted #c9c5c2;
}

.hint-left {
    width: 245px;
    text-align: right;
}

.selection {
    padding-left: 6px;
}

/* Panel at the bottom of the desktop */
.taskbar {
    height: 47px;
    flex: none;
    display: flex;
    align-items: center;
    border-top: 2px solid #222;
    background: #393939;
    color: #ddd;
    font-family: "Noto Sans", sans-serif;
    font-size: 18px;
}

.launchers {
    display: flex;
    align-items: center;
}

.launchers .plain {
    width: 45px;
}

.task {
    width: 280px;
    height: 45px;
    display: flex;
    align-items: center;
    gap: 12px;
    padding-left: 1px;
    border: 0;
    background: none;
    white-space: nowrap;
}

.task.active {
    padding-left: 6px;
    background: #92b977;
    color: #f4f8ef;
}

.tray {
    margin-left: auto;
    margin-right: -4px;
    display: flex;
    align-items: center;
    gap: 10px;
}

.tray time {
    white-space: nowrap;
}
```
